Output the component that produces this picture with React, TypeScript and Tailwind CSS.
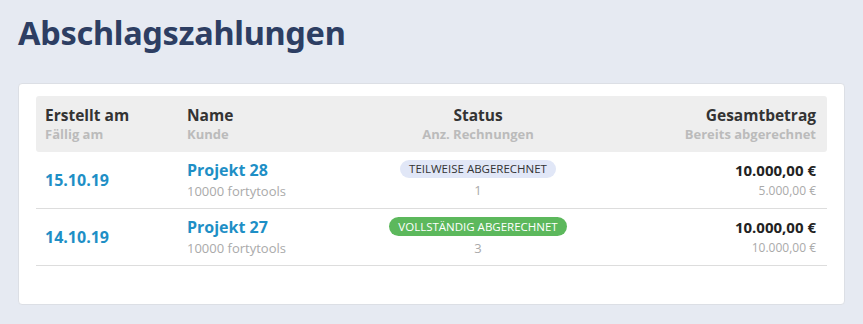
const rows = [
  {
    date: "15.10.19",
    name: "Projekt 28",
    customer: "10000 fortytools",
    status: "Teilweise abgerechnet",
    done: false,
    invoices: 1,
    total: "10.000,00 €",
    billed: "5.000,00 €",
  },
  {
    date: "14.10.19",
    name: "Projekt 27",
    customer: "10000 fortytools",
    status: "Vollständig abgerechnet",
    done: true,
    invoices: 3,
    total: "10.000,00 €",
    billed: "10.000,00 €",
  },
];

const cols = "grid grid-cols-[142px_200px_200px_1fr]";

export default function App() {
  return (
    <div className="min-h-[324px] bg-[#e6eaf2] px-[18px] pt-[13px] pb-[20px] font-['Open_Sans',sans-serif]">
      <h1 className="font-['Noto_Sans',sans-serif] text-[32.5px] font-bold leading-[40px] tracking-[-0.3px] text-[#2d3e63]">
        Abschlagszahlungen
      </h1>

      <div className="mt-[30px] rounded-[4px] border border-[#dcdfe5] bg-white px-[17px] pt-[12px] pb-[38px]">
        {/* Header */}
        <div className={`${cols} h-[56px] items-center rounded-[3px] bg-[#eeeeee]`}>
          <div className="pl-[9px]">
            <div className="text-[15.5px] font-bold leading-[20px] text-[#333]">Erstellt am</div>
            <div className="text-[13px] font-bold leading-[18px] text-[#bbbbbb]">Fällig am</div>
          </div>
          <div className="pl-[9px]">
            <div className="text-[15.5px] font-bold leading-[20px] text-[#333]">Name</div>
            <div className="text-[13px] font-bold leading-[18px] text-[#bbbbbb]">Kunde</div>
          </div>
          <div className="text-center">
            <div className="text-[15.5px] font-bold leading-[20px] text-[#333]">Status</div>
            <div className="text-[13px] font-bold leading-[18px] text-[#bbbbbb]">Anz. Rechnungen</div>
          </div>
          <div className="pr-[11px] text-right">
            <div className="text-[15.5px] font-bold leading-[20px] text-[#333]">Gesamtbetrag</div>
            <div className="text-[13px] font-bold leading-[18px] text-[#bbbbbb]">Bereits abgerechnet</div>
          </div>
        </div>

        {/* Rows */}
        {rows.map((r) => (
          <div key={r.name} className={`${cols} h-[57px] items-center border-b border-[#dddddd]`}>
            <div className="pl-[9px] text-[16px] font-bold text-[#1e8fc6]">{r.date}</div>
            <div className="pl-[9px]">
              <div className="text-[16px] font-bold leading-[22px] text-[#1e8fc6]">{r.name}</div>
              <div className="text-[13px] leading-[20px] text-[#aaaaaa]">{r.customer}</div>
            </div>
            <div className="flex flex-col items-center">
              <span
                className={
                  r.done
                    ? "rounded-full bg-[#5cb85c] px-[9px] text-[11.5px] leading-[19px] uppercase text-white"
                    : "rounded-full bg-[#e1e7f7] px-[9px] text-[11.5px] leading-[18px] uppercase text-[#333]"
                }
              >
                {r.status}
              </span>
              <div className="mt-[2px] text-[13px] leading-[20px] text-[#aaaaaa]">{r.invoices}</div>
            </div>
            <div className="pr-[11px] text-right">
              <div className="text-[15px] font-bold leading-[22px] text-[#222]">{r.total}</div>
              <div className="text-[12px] leading-[20px] text-[#aaaaaa]">{r.billed}</div>
            </div>
          </div>
        ))}
      </div>
    </div>
  );
}
